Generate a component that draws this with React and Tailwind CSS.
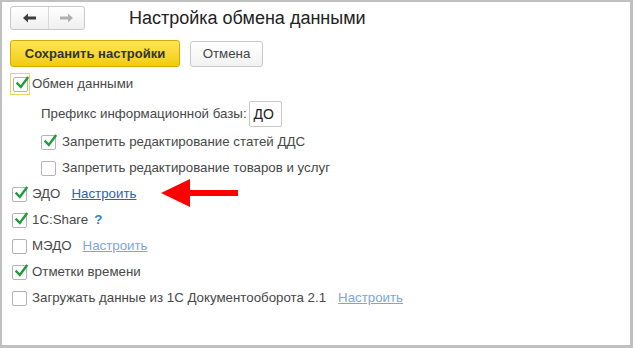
import React from "react";

function Check({ checked, className = "" }) {
  return (
    <span
      className={
        "relative inline-block w-[15px] h-[15px] shrink-0 rounded-[2px] border border-[#b4b4b4] bg-white " +
        className
      }
    >
      {checked && (
        <svg
          className="absolute left-[1px] top-[-2px]"
          width="15"
          height="15"
          viewBox="0 0 15 15"
        >
          <path
            d="M2.5 7.5 L5.8 11 L12.5 2"
            fill="none"
            stroke="#1f9a3c"
            strokeWidth="2.4"
            strokeLinecap="square"
          />
        </svg>
      )}
    </span>
  );
}

function Row({ children, indent = false, className = "" }) {
  return (
    <div
      className={
        "flex items-center h-[26px] " +
        (indent ? "pl-[39px] " : "pl-[10px] ") +
        className
      }
    >
      {children}
    </div>
  );
}

export default function App() {
  return (
    <div
      className="w-[633px] h-[348px] bg-white border-t-2 border-l-2 border-r-[3px] border-b-[3px] border-[#c0c0c0] text-[13.3px] text-[#484848] overflow-hidden"
      style={{ fontFamily: '"Liberation Sans", Arial, sans-serif' }}
    >
      <div className="flex flex-col">
        {/* header */}
        <div className="flex items-center pt-[4px] pl-[8px] h-[28px]">
          <div className="flex h-[24px] rounded-[3px] border border-[#c8c8c8] bg-gradient-to-b from-white to-[#efefef]">
            <div className="w-[38px] flex items-center justify-center border-r border-[#d8d8d8]">
              <svg width="13" height="10" viewBox="0 0 13 10">
                <path d="M0 5 L5 0.5 L5 3.5 L13 3.5 L13 6.5 L5 6.5 L5 9.5 Z" fill="#3d3d3d" />
              </svg>
            </div>
            <div className="w-[35px] flex items-center justify-center">
              <svg width="13" height="10" viewBox="0 0 13 10">
                <path d="M13 5 L8 0.5 L8 3.5 L0 3.5 L0 6.5 L8 6.5 L8 9.5 Z" fill="#b0b0b0" />
              </svg>
            </div>
          </div>
          <div className="ml-[44px] text-[18px] text-[#222] leading-none">
            Настройка обмена данными
          </div>
        </div>

        {/* buttons */}
        <div className="flex items-center gap-[10px] pl-[8px] mt-[10px]">
          <div className="h-[27px] w-[170px] flex items-center justify-center rounded-[3px] border border-[#d2ad00] bg-gradient-to-b from-[#ffe650] to-[#f2cb00] font-bold text-[13px] text-[#333]">
            Сохранить настройки
          </div>
          <div className="h-[26px] w-[73px] flex items-center justify-center rounded-[3px] border border-[#c8c8c8] bg-gradient-to-b from-white to-[#f2f2f2] text-[#444]">
            Отмена
          </div>
        </div>

        {/* options */}
        <div className="flex flex-col mt-[4px]">
          <div className="flex items-center h-[26px] pl-[8px]">
            <span className="flex items-center justify-center w-[20px] h-[22px] border border-[#f2d35a]">
              <Check checked />
            </span>
            <span className="ml-[2px]">Обмен данными</span>
          </div>

          <Row indent className="mt-[4px]">
            <span>Префикс информационной базы:</span>
            <span className="ml-[2px] h-[26px] w-[33px] flex items-center pl-[4px] border border-[#c8c8c8] rounded-[2px] text-[#222] text-[14px]">
              ДО
            </span>
          </Row>

          <Row indent className="mt-[2px]">
            <Check checked />
            <span className="ml-[6px]">Запретить редактирование статей ДДС</span>
          </Row>

          <Row indent>
            <Check />
            <span className="ml-[6px]">Запретить редактирование товаров и услуг</span>
          </Row>

          <Row className="relative">
            <Check checked />
            <span className="ml-[5px]">ЭДО</span>
            <span className="ml-[11px] text-[#2f62b4] underline">Настроить</span>
            <svg
              className="absolute left-[159px] top-[-2px]"
              width="80"
              height="30"
              viewBox="0 0 80 30"
            >
              <path d="M0 14 L29 0 L29 11 L77 11 L77 17 L29 17 L29 28 Z" fill="#ff0000" />
            </svg>
          </Row>

          <Row>
            <Check checked />
            <span className="ml-[5px]">1С:Share</span>
            <span className="ml-[6px] font-bold text-[#2f7fd0]">?</span>
          </Row>

          <Row>
            <Check />
            <span className="ml-[5px]">МЭДО</span>
            <span className="ml-[11px] text-[#7fa5db] underline">Настроить</span>
          </Row>

          <Row>
            <Check checked />
            <span className="ml-[5px]">Отметки времени</span>
          </Row>

          <Row>
            <Check />
            <span className="ml-[5px]">Загружать данные из 1С Документооборота 2.1</span>
            <span className="ml-[12px] text-[#7fa5db] underline">Настроить</span>
          </Row>
        </div>
      </div>
    </div>
  );
}
